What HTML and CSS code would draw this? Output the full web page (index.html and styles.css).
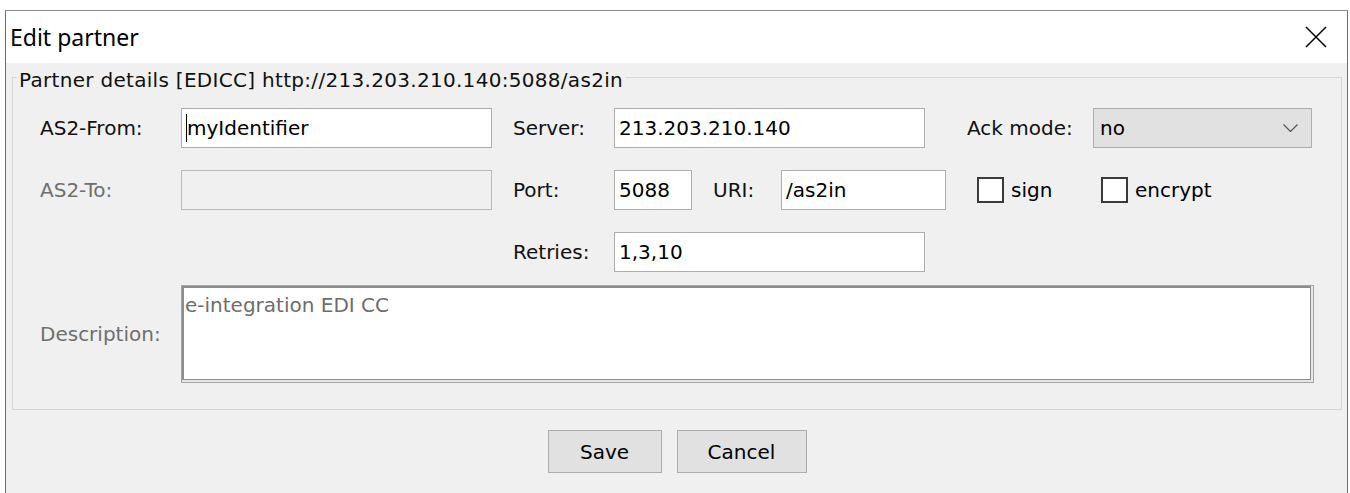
FILE: index.html
```html
<!DOCTYPE html>
<html lang="en">
<head>
<meta charset="utf-8">
<title>Edit partner</title>
<link rel="stylesheet" href="styles.css">
</head>
<body>
<div class="window">
  <div class="titlebar">
    <span class="title">Edit partner</span>
    <span class="close" aria-label="Close">
      <svg width="22" height="22" viewBox="0 0 22 22"><path d="M1 1 L21 21 M21 1 L1 21" stroke="#000" stroke-width="1.5" fill="none"/></svg>
    </span>
  </div>
  <div class="content">
    <fieldset class="group">
      <legend>Partner details [EDICC] http://213.203.210.140:5088/as2in</legend>
      <div class="rows">
        <div class="row">
          <span class="lbl lbl-a">AS2-From:</span>
          <div class="field w-wide"><span class="caret"></span>myIdentifier</div>
          <span class="lbl lbl-b gap-col">Server:</span>
          <div class="field w-wide">213.203.210.140</div>
          <span class="lbl lbl-c gap-ack">Ack mode:</span>
          <div class="combo">
            <span>no</span>
            <svg width="15" height="8" viewBox="0 0 15 8"><path d="M0.5 0.5 L7.5 7.5 L14.5 0.5" stroke="#555" stroke-width="1.2" fill="none"/></svg>
          </div>
        </div>
        <div class="row">
          <span class="lbl lbl-a disabled">AS2-To:</span>
          <div class="field w-wide field-off"></div>
          <span class="lbl lbl-b gap-col">Port:</span>
          <div class="field w-port">5088</div>
          <span class="lbl lbl-uri gap-col">URI:</span>
          <div class="field w-uri">/as2in</div>
          <label class="check check-sign"><span class="box"></span>sign</label>
          <label class="check"><span class="box"></span>encrypt</label>
        </div>
        <div class="row">
          <span class="lbl lbl-b indent">Retries:</span>
          <div class="field w-wide">1,3,10</div>
        </div>
        <div class="row row-desc">
          <span class="lbl lbl-a disabled">Description:</span>
          <div class="desc-frame">
            <div class="desc-box">e-integration EDI CC</div>
          </div>
        </div>
      </div>
    </fieldset>
    <div class="buttons">
      <button class="btn btn-save" type="button">Save</button>
      <button class="btn btn-cancel" type="button">Cancel</button>
    </div>
  </div>
</div>
</body>
</html>
```
FILE: styles.css
```css
html, body {
  margin: 0;
  background: #fff;
  overflow: hidden;
}

body {
  font-family: "DejaVu Sans", sans-serif;
  font-size: 20px;
  color: #111;
}

/* dialog frame */
.window {
  box-sizing: border-box;
  width: 1343px;
  height: 483px;
  margin: 10px 0 0 5px;
  border: 1px solid #6e6e6e;
  border-top-color: #8c8c8c;
  border-bottom: none;
  display: flex;
  flex-direction: column;
}

.titlebar {
  height: 52px;
  flex: none;
  background: #fff;
  display: flex;
  align-items: center;
  justify-content: space-between;
  padding-left: 4px;
}

.title {
  font-family: "Noto Sans", sans-serif;
  font-size: 23px;
  color: #000;
}

.close {
  display: flex;
  margin-right: 20px;
}

.content {
  flex: 1;
  background: #f0f0f0;
  padding: 0 5px 0 6px;
}

/* group box */
.group {
  margin: 0;
  padding: 0;
  border: 1px solid #d6d6d6;
  min-width: 0;
}

.group legend {
  font-size: 20px;
  line-height: 24px;
  letter-spacing: 0.3px;
  padding: 5px 2px 0;
  margin-left: 4px;
  color: #111;
}

.rows {
  display: flex;
  flex-direction: column;
  padding: 16px 0 26px 27px;
}

.row {
  display: flex;
  align-items: center;
  height: 40px;
}

.row + .row {
  margin-top: 22px;
}

.row + .row-desc {
  margin-top: 13px;
  height: 98px;
}

/* labels */
.lbl {
  flex: none;
  white-space: nowrap;
}

.lbl-a { width: 141px; }
.lbl-b { width: 101px; }
.lbl-c { width: 126px; }
.lbl-uri { width: 68px; }

.gap-col { margin-left: 21px; }
.gap-ack { margin-left: 42px; }
.indent { margin-left: 473px; }

.disabled { color: #6f6f6f; }

/* text fields */
.field {
  box-sizing: border-box;
  height: 40px;
  flex: none;
  border: 1px solid #adadad;
  background: #fff;
  padding: 0 4px;
  display: flex;
  align-items: center;
  color: #000;
  white-space: nowrap;
}

.w-wide { width: 311px; }
.w-port { width: 78px; }
.w-uri { width: 165px; }

.field-off {
  background: #f0f0f0;
  border-color: #b9b9b9;
}

.caret {
  display: inline-block;
  width: 1px;
  height: 28px;
  background: #000;
}

/* combo box */
.combo {
  box-sizing: border-box;
  width: 219px;
  height: 40px;
  flex: none;
  border: 1px solid #adadad;
  background: #e1e1e1;
  padding: 0 13px 0 6px;
  display: flex;
  align-items: center;
  justify-content: space-between;
  color: #000;
}

/* check boxes */
.check {
  display: flex;
  align-items: center;
  gap: 7px;
  color: #000;
}

.check-sign {
  margin-left: 31px;
  width: 124px;
}

.box {
  box-sizing: border-box;
  width: 27px;
  height: 26px;
  border: 2px solid #3a3a3a;
  background: #fff;
}

/* description area */
.desc-frame {
  box-sizing: border-box;
  width: 1133px;
  height: 98px;
  flex: none;
  border: 1px solid #a5a5a5;
  padding: 0 2px 2px 0;
  background: #e6e6e6;
  display: flex;
}

.desc-box {
  flex: 1;
  border: 1px solid #8d8d8d;
  border-top-width: 2px;
  border-left-width: 2px;
  background: #fff;
  padding: 5px 3px 0 1px;
  line-height: 24px;
  color: #6d6d6d;
}

/* dialog buttons */
.buttons {
  display: flex;
  justify-content: center;
  gap: 15px;
  margin-top: 20px;
}

.btn {
  height: 43px;
  border: 1px solid #adadad;
  background: #e1e1e1;
  font: inherit;
  color: #000;
  padding: 0;
}

.btn-save { width: 114px; }
.btn-cancel { width: 130px; }
```
